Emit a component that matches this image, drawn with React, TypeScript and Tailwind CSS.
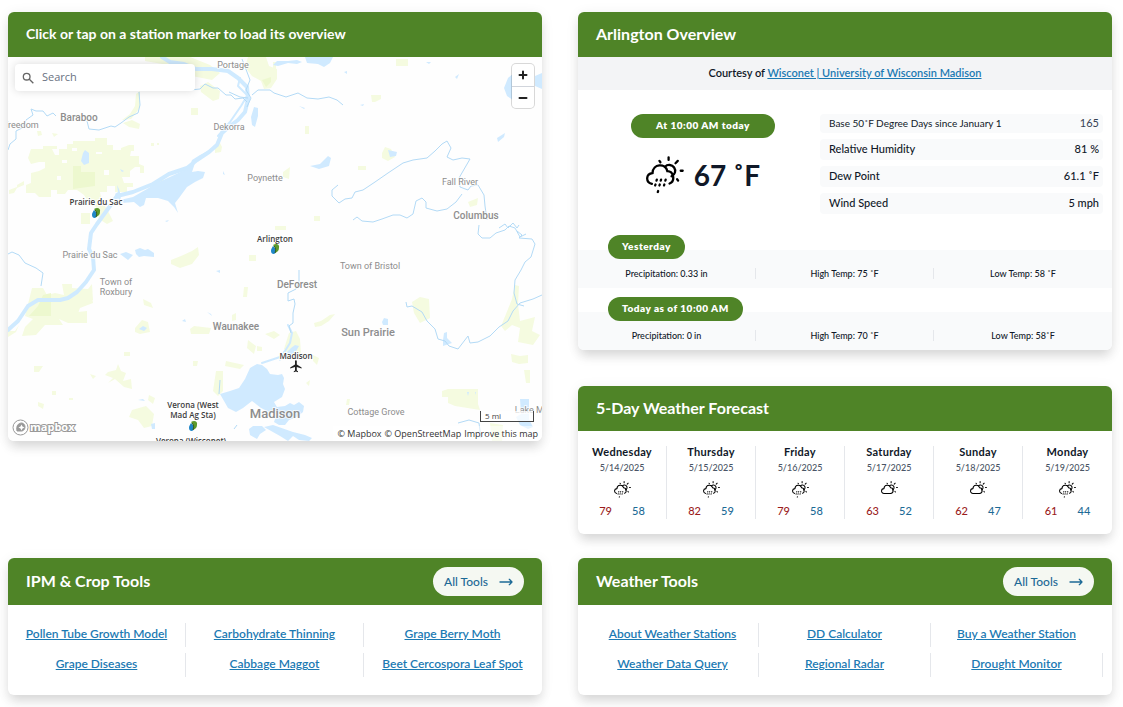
import { useState } from 'react'
import type { ReactNode } from 'react'

interface Town {
  name: string
  x: number
  y: number
  size: number
}

interface ForecastDay {
  day: string
  date: string
  rain: boolean
  high: number
  low: number
}

const towns: Town[] = [
  { name: 'Portage', x: 233, y: 68, size: 9 },
  { name: 'Baraboo', x: 79, y: 121, size: 10 },
  { name: 'Freedom', x: 21, y: 128, size: 9 },
  { name: 'Dekorra', x: 229, y: 130, size: 9 },
  { name: 'Poynette', x: 265, y: 181, size: 9 },
  { name: 'Fall River', x: 460, y: 185, size: 9 },
  { name: 'Columbus', x: 476, y: 219, size: 10 },
  { name: 'Prairie du Sac', x: 90, y: 258, size: 9 },
  { name: 'Town of', x: 116, y: 285, size: 9 },
  { name: 'Roxbury', x: 116, y: 295, size: 9 },
  { name: 'Town of Bristol', x: 370, y: 269, size: 9 },
  { name: 'DeForest', x: 297, y: 288, size: 10 },
  { name: 'Waunakee', x: 236, y: 330, size: 10 },
  { name: 'Sun Prairie', x: 368, y: 336, size: 11 },
  { name: 'Madison', x: 275, y: 418, size: 13 },
  { name: 'Cottage Grove', x: 376, y: 415, size: 9 },
  { name: 'Lake Mills', x: 535, y: 413, size: 9 },
]

const stationLabels = [
  { name: 'Prairie du Sac', x: 96, y: 205 },
  { name: 'Arlington', x: 275, y: 242 },
  { name: 'Madison', x: 296, y: 359 },
  { name: 'Verona (West', x: 193, y: 408 },
  { name: 'Mad Ag Sta)', x: 193, y: 418 },
  { name: 'Verona (Wisconet)', x: 191, y: 444 },
]

const stationMarkers = [
  { x: 96, y: 213 },
  { x: 275, y: 249 },
  { x: 193, y: 426 },
]

const conditions = [
  { label: 'Relative Humidity', value: '81 %' },
  { label: 'Dew Point', value: '61.1 ˚F' },
  { label: 'Wind Speed', value: '5 mph' },
]

const forecast: ForecastDay[] = [
  { day: 'Wednesday', date: '5/14/2025', rain: true, high: 79, low: 58 },
  { day: 'Thursday', date: '5/15/2025', rain: true, high: 82, low: 59 },
  { day: 'Friday', date: '5/16/2025', rain: true, high: 79, low: 58 },
  { day: 'Saturday', date: '5/17/2025', rain: false, high: 63, low: 52 },
  { day: 'Sunday', date: '5/18/2025', rain: false, high: 62, low: 47 },
  { day: 'Monday', date: '5/19/2025', rain: true, high: 61, low: 44 },
]

const cropTools = [
  'Pollen Tube Growth Model',
  'Carbohydrate Thinning',
  'Grape Berry Moth',
  'Grape Diseases',
  'Cabbage Maggot',
  'Beet Cercospora Leaf Spot',
]

const weatherTools = [
  'About Weather Stations',
  'DD Calculator',
  'Buy a Weather Station',
  'Weather Data Query',
  'Regional Radar',
  'Drought Monitor',
]

function WeatherIcon({ rain, className }: { rain: boolean; className: string }) {
  return (
    <svg viewBox="24 22 116 116" className={className} fill="none" stroke="#000" strokeWidth="7" strokeLinecap="round" aria-hidden="true">
      {/* Sun */}
      <path d="M82 55a18 18 0 1 1 20 29" />
      <path d="M93 26v8M114 44l7-7M130 67h6M119 93l3 4M65 37l3 4" />
      {/* Cloud */}
      {rain ? (
        <>
          <path d="M42 107c-20-5-19-31 2-33 1-29 39-31 45-6 20 0 25 31 7 38" />
          <path d="M57 94l-1 3M53 109l-1 3M70 94l-1 3M66 109l-1 3M61 129l-1 3M84 94l-1 3M80 109l-1 3" />
        </>
      ) : (
        <path d="M45 107c-24 0-22-32-1-33 1-29 39-31 45-6 24 0 24 39 0 39z" />
      )}
    </svg>
  )
}

function Card({ title, action, titleClass = 'text-base', children }: {
  title: string
  action?: ReactNode
  titleClass?: string
  children: ReactNode
}) {
  return (
    <section className="overflow-hidden rounded-md bg-white shadow-[0_8px_12px_-2px_rgba(0,0,0,0.12),0_2px_14px_rgba(0,0,0,0.07)]">
      <header className="flex items-center justify-between bg-[#4f8427] px-[18px] py-[9px]">
        <h2 className={`${titleClass} pb-0.5 leading-[25px] font-bold text-white`}>{title}</h2>
        {action}
      </header>
      {children}
    </section>
  )
}

function Pill({ children, className = '' }: { children: ReactNode; className?: string }) {
  return (
    <span className={`inline-block rounded-full bg-[#4f8427] pb-0.5 text-center text-[10px] leading-[22px] font-extrabold tracking-wider text-white ${className}`}>
      {children}
    </span>
  )
}

function StationMap() {
  const [query, setQuery] = useState('')

  return (
    <div className="relative h-96 overflow-hidden bg-[#fefefe]">
      <svg viewBox="8 57 534 384" preserveAspectRatio="xMidYMid slice" className="block h-full w-full" role="img" aria-label="Station map">
        {/* Parks and farmland */}
        <g fill="#f5fbe0">
          <path d="M145 57h45l20 8 10 8-8 7-20-4-12-9-35-6z" />
          <path d="M31 149h12v-3h14v3h-5l3 6h4v-6h8v-5h6v-3h22v-3h12v7h6v5h8v-2l8-3h5v6h-3l-1 5h9v8l5 2v7h-4v-6h-5l-5 4v6h-8l2 6h9v4h-6v5h-12v-6h-8v6h-7l2 10 5 7 6 12-6 3-8-5-3-12-7-4-5-8-7-5h-9l-3 4h-8v-4h-6v7h-12l-4-4h-9v-8l5-2v-10l8-2 6-3v-6h-6l-8 2-3-6z" />
          <path d="M9 190l8-3v-2l7-4v4l-7 3-3 5-5 1zM81 213h9v11h-9zM150 185h6v-5h8l-6 8h-8zM151 143h3v3h-3zM157 143h2v2h-2zM37 131h4l1 4-4 1zM52 133l6 1-4 3z" />
          <path d="M136 94l4-3v16l-4 6-5 6-9 1 8-6 5-8zM123 123l9-3 8 4-1 5-10-2z" />
          <path d="M200 86l8-4 12 9-1 8-6 2-12-9zM248 57h18l3 9 8 3v10l-6 9-7 1-3-8-9-5-7-9z" />
          <path d="M191 108h7v7h-7zM215 145l3-6 4 8-1 5-6 1zM396 59h12v7h-12zM371 95h10v4l-6 3h-3zM305 126h4v8h-4z" />
          <path d="M382 153l3-6 6 2 4 8-7 4-6-3zM283 172l7-5-1 12-6-2zM275 226h11v4h-11zM314 216h6v5h-6zM358 166h8v4h-8zM273 62h3v12h-3z" />
          <path d="M32 288h11l4 7 8-2 9 2-2-11h10v4l16 1 4-5 1 16-11-1-4 13 9-1v12H68l-9-4 4 6H45l-9 10-14 1 3-9 8-8-8-3z" />
          <path d="M70 295l21-5 2 13-13 5-3 8-6-1zM8 331h7l4-6-3 7-8 5zM171 260l10-4 11-5 6-4 1 8-7 9-12 4-9-4z" />
          <path d="M135 328l7-8 6 2 2 10-10 2-5-2zM190 329l4-3 17 2-2 6h-18zM143 299l8 4 2 5-9-3zM249 255h7v6h-7z" />
          <path d="M116 370l2-6 3 7 5 2-3 8 8-2 1 10-8-2-9-8-7 4 5-5-8-3 3-3z" />
          <path d="M216 371h7v20l-5 5-5-5zM226 361l18 4-4 4-15-3zM248 340l8 6-2 8-7-6zM257 346l5 1v4h-5zM244 287h4l-1 10h-4zM232 315l4-2v7l-4 1zM265 334l9-3 6 4-6 4z" />
          <path d="M34 366h9l-4 6h-5zM38 402l6 2-1 5-5-3zM124 352h6v4h-6zM193 361h5l-1 5h-4zM180 403h11v4h-11zM149 395l6 3-2 6-5-4zM52 391h4v4h-4zM69 398h4v2h-4zM90 374l6 2-3 3z" />
          <path d="M289 333l7-2 4 8 1 15-10 4-7-9zM314 323l7-2 9-6 5-1-6 7-8 5-6 1zM313 355l6 3-2 7-4-4zM306 383l4-3-1 6zM347 399h3l-1 6h-3z" />
          <path d="M412 302l8-5 9 2 1 19-10 5-6-10zM448 389h30v15l2 6-25-4-7-3v-6h-6v-6z" />
          <path d="M501 326l5-12 6-15 3-14 4 1-1 18 2 17 15-4-3 14 8 4-7 10-15-3 2-14-8-3-7 6z" />
          <path d="M511 354l9 2 8-1v8l-9 1-7-2zM524 370h6v13h-4zM490 423l13 2-1 16h-10z" />
          <path d="M468 202l10-4-1 7-7 2zM132 410l14-4 8 8-2 12-8 2-6-8-9-3z" />
        </g>
        <g fill="#edf8cf">
          <path d="M73 166h8v6h14v14l-22 3z" />
          <path d="M43 295l8-2v23H29l9-10zM262 80l9-3v5l-5 5z" />
        </g>
        <path fill="#fefefe" d="M62 160h5v3h-5zM96 152h6v2h-6zM57 176h4v4h-4zM104 170h5v5h-5zM72 148h5v3h-5z" />

        {/* Lakes */}
        <g fill="#d0eaff">
          <path d="M215 144L210 150 200 155 192 160 189 168 172 176 155 184 147 189 133 197 120 200 122 203 134 202 140 207 144 205 146 198 158 198 168 201 174 207 178 213 175 203 179 198 187 187 195 182 203 178 205 172 198 171 192 172 195 163 203 156 213 149z" />
          <path d="M83 153l2-3 4 3v10l-5 2-3-4zM251 117l3-10 4 1v8l-3 11-3-2zM117 185l2 4 2 7-1 5-5-7 3-2zM120 169l4 2-2 1zM223 171l2 4-2-1zM165 221l4-1-2 2z" />
          <path d="M274 64l3-3 11 0 9-1 5 2-5 2-9-1-10 3-5-1zM305 57l2 6 11 1 6 3 6-4 3-6z" />
          <path d="M310 166l10-2 8-8 3 2-2 8-10 3zM388 150l9 2-1 4-6 1zM497 138l8-5-1 4-6 5zM504 88l4-10 6-5-2 10 5 14-4 3-6-4zM542 73l-7 3v10l7 3zM455 77l4-3-2 5zM426 62h5l-2 2zM344 72l3-1v3zM360 105l4-1-1 2zM299 106l6 2-1 1z" />
          <path d="M120 254l6-2 7 3-5 5zM135 250l5-2 5 2 3-1 6 4v4l-10-1-5 1-3-3zM139 329l4-3 4 2-3 3zM182 321l3-2 1 3zM207 312l4 2 1 2zM216 271l4-1v3z" />
          <path d="M220 394l10-3 9-3 6-9 5-11 7-4 5 1 5 4 3 5 8 1 4-1 2 4-1 6 2 5-3 8-8 5 3 5 8-1 5-3 4 2 5-3 5 4-1 6-6 5-8 3-4 5-6 0-5-3 2-6 4-1-5-5-6 2-8-4-9-7-9 7-7 4-8-4z" />
          <path d="M281 357l5-4 5-5 4-3 4 1-4 7-9 5-7 3zM249 429l4-3h9l4 4-6 4-3 5-7-4zM264 427l9-2 20 7 12 3 7 3-3 3-10-1-6-4-5 5-8-5zM138 400l5-1 2 2zM151 424l4-1v6h-3z" />
          <path d="M382 322l2-4 4 1v6h-5zM443 340l1-7 3-1v6l5 5-9 3zM520 399h9v20l4 8-5 2-8-4-4-8 5-3zM467 392h2l-1 4zM475 392h1l-1 3z" />
        </g>

        {/* Rivers */}
        <g fill="none" stroke="#cfeaff" strokeLinejoin="round" strokeLinecap="round">
          <path strokeWidth="4" d="M162 57l8 5 14 2 12 5 16 0 16 2 10 7 9 9 1 12-3 13-7 8-8 6-8 7-5 12-8 7-12 8-10 8-18 6-16 10-20 8-16 4-7 10-13 18-6 9-2 16 4 8 1 13-8 12-9 10-9 6-8 2h-22l-10 6-10 15-10 9-12 2" />
          <path strokeWidth="2" d="M262 363l18-6 5-6 5-8 2-10-4-8M240 78l-2 8 8 8M247 96l-6 10-11 16-12 14" />
        </g>
        <g fill="none" stroke="#b3daf6" strokeWidth="1" strokeLinejoin="round">
          <path d="M8 150l2-6 6-5 0-8 6-3 4-8 7-5-2-6 5 2 7 0 4 5 6-3 3 3M87 121l2 8 10 1 12-4 4 1 6-4 8-6 9-4 2-8-1-13" />
          <path d="M8 254l4-2 7 3 6 8 11 5 7 5-2 13" />
          <path d="M190 90l10-1 5-5 8 4 5 0 8 7 5 0 4 4 8-1 4 4M252 95l6-5 12 0 4 3 12 4 12-4 9 5 11 1 11-2 8 3 6 5" />
          <path d="M338 185l-6 5 0 6 7 7 6-4 7-1 3-6 8-2 12-8 13-9 15-10 10-3 14-2 8-7 7-7 5-3 4 7-4 9 6 3 9-2 8 1-11 19 1 9 8 3 3-4 7-1 6 10 1 11 2 14" />
          <path d="M353 220l4-3 5 4 11 1 9-3 11-4 7 0 7 3 6-4 3-13 6-3 4 4 0 6 11 3 10-2 9-7 6-8M499 228l6-4 3 4 5-5 4 5 2-3M479 225l-1 9 4 4 8 0 6-5 9-3 4-4 6 2 5 9 6-3" />
          <path d="M517 231l5 4-3 3 13 1 3 5-4 13-6 5-4 8-6 10-1 13 3 11 7 2M542 295l-9 4-13 4-7 8-5 10-9 6-9 9-12 6-8 1-2-7-10 13-9-3-4-5-7-2-3-10-8-8-5-9-10-6-5 1-1-5" />
          <path d="M299 270v12l-3 7-8 4 0 8 6-2 1 5-2 9 0 10-4 3 2 7M220 380l-1 14M458 423l11-3 10 3 2 15M237 425l-3 4M242 59l5 13 3 8-4 10 5 8-4 9M229 92l11 5 8 1" />
        </g>

        {/* Town names */}
        <g textAnchor="middle" fill="#8d8d8d" stroke="#fff" strokeWidth="2" strokeOpacity="0.7" paintOrder="stroke" className="font-['Roboto',sans-serif] font-normal">
          {towns.map((town) => (
            <text key={town.name} x={town.x} y={town.y} fontSize={town.size} className={town.size > 9 ? 'font-medium' : ''}>{town.name}</text>
          ))}
        </g>

        {/* Stations */}
        <g textAnchor="middle" fill="#3c3c3c" stroke="#fff" strokeWidth="2" paintOrder="stroke" fontSize="8" className="font-['Open_Sans',sans-serif] font-semibold">
          {stationLabels.map((label) => (
            <text key={label.name} x={label.x} y={label.y}>{label.name}</text>
          ))}
        </g>
        {stationMarkers.map((marker) => (
          <g key={`${marker.x}-${marker.y}`} transform={`translate(${marker.x} ${marker.y})`}>
            <path d="M-2-3c-2 3-2 4-2 5 0 4 5 4 5 0 0-2-1-3-3-5z" fill="#1f86c7" />
            <path d="M-2-4c3-2 7-1 6 3 0 3-2 4-4 5 1-4 0-6-2-8z" fill="#5c9a2c" />
            <path d="M-1-3c2 2 2 4 1 7" fill="none" stroke="#345b22" strokeWidth="1" />
          </g>
        ))}
        <path transform="translate(289 359) scale(.6)" fill="#222" d="M21 16v-2l-8-5V3.500a1.500 1.500 0 0 0-3 0V9l-8 5v2l8-2.500V19l-2 1.500V22l3.500-1 3.500 1v-1.500L13 19v-5.500z" />

        {/* Mapbox logo */}
        <g stroke="#999" fill="#fff">
          <circle cx="20.500" cy="427.500" r="7.500" strokeWidth="1" />
          <path d="M17 431c-1-5 1-8 5-8 4 1 4 7 0 8z" fill="#999" />
          <path d="M21.500 424.500l1 2 2 1-2 1-1 2-1-2-2-1 2-1z" strokeWidth="0" />
          <text x="30" y="431" fontSize="11" strokeWidth="2" paintOrder="stroke" className="font-['Open_Sans',sans-serif] font-bold">mapbox</text>
        </g>
      </svg>

      {/* Search box */}
      <label className="absolute top-[7px] left-[7px] flex h-[27px] w-[180px] items-center gap-2 rounded bg-white px-[7px] shadow-[0_0_8px_rgba(0,0,0,0.14)]">
        <svg viewBox="0 0 18 18" className="h-3 w-3 shrink-0" fill="none" stroke="#666" strokeWidth="2" aria-hidden="true">
          <circle cx="7" cy="7" r="5" />
          <path d="M11 11l6 6" />
        </svg>
        <input
          type="text"
          aria-label="Search"
          placeholder="Search"
          value={query}
          onChange={(e) => setQuery(e.target.value)}
          className="w-full min-w-0 font-['Open_Sans',sans-serif] text-[11px] text-gray-700 outline-none placeholder:text-gray-500"
        />
      </label>

      {/* Zoom controls */}
      <div className="absolute top-[7px] right-2 flex w-[22px] flex-col divide-y divide-gray-300 overflow-hidden rounded-sm bg-white ring-1 ring-black/15">
        <button type="button" aria-label="Zoom in" className="grid h-[23px] place-items-center">
          <svg viewBox="0 0 10 10" className="h-2.5 w-2.5" stroke="#222" strokeWidth="2" strokeLinecap="round"><path d="M5 1.500v7M1.500 5h7" /></svg>
        </button>
        <button type="button" aria-label="Zoom out" className="grid h-[21px] place-items-center">
          <svg viewBox="0 0 10 10" className="h-2.5 w-2.5" stroke="#222" strokeWidth="2" strokeLinecap="round"><path d="M1.500 5h7" /></svg>
        </button>
      </div>

      {/* Scale and attribution */}
      <div className="absolute right-2 bottom-[19px] h-[11px] w-[54px] border border-t-0 border-[#444] bg-white/75 px-1 font-['Open_Sans',sans-serif] text-[8px] leading-[9px] text-[#444]">
        5 mi
      </div>
      <div className="absolute right-0 bottom-0 flex gap-[3px] bg-white/50 px-1 font-['Open_Sans',sans-serif] text-[9px] leading-[15px] text-[#333]">
        <a href="#mapbox">© Mapbox</a>
        <a href="#osm">© OpenStreetMap</a>
        <a href="#improve">Improve this map</a>
      </div>
    </div>
  )
}

function DaySummary({ title, items }: { title: string; items: string[] }) {
  return (
    <div>
      <Pill className="relative ml-[30px] px-3.5 align-top">{title}</Pill>
      <div className="-mt-[9px] grid grid-cols-3 divide-x divide-gray-200 bg-[#f9fafb] pt-[18px] pb-[9px]">
        {items.map((item) => (
          <div key={item} className="text-center text-[9px] leading-[11px] font-medium text-gray-900">{item}</div>
        ))}
      </div>
    </div>
  )
}

function Overview() {
  return (
    <Card title="Arlington Overview">
      <p className="bg-gray-100 pb-0.5 text-center text-[11px] leading-[31px] font-semibold text-gray-900">
        Courtesy of{' '}
        <a href="#wisconet" className="text-[#1c7ab3] underline">Wisconet | University of Wisconsin Madison</a>
      </p>
      <div className="flex gap-[45px] pt-6 pr-[9px] pb-[21px] pl-[53px]">
        <div className="w-36 shrink-0">
          <Pill className="w-full align-top">At 10:00 AM today</Pill>
          <div className="mt-[17px] flex items-center justify-center gap-2.5">
            <WeatherIcon rain className="h-[38px] w-[38px]" />
            <span className="text-[28px] leading-10 font-bold text-gray-900">67 ˚F</span>
          </div>
        </div>
        <dl className="flex flex-1 flex-col gap-1.5 text-gray-900">
          <div className="flex justify-between rounded bg-[#f9fafb] pr-1 pl-[9px]">
            <dt className="text-[10px] leading-[19px]">Base 50˚F Degree Days since January 1</dt>
            <dd className="pb-0.5 text-[11px] leading-[17px] text-gray-700">165</dd>
          </div>
          {conditions.map((row) => (
            <div key={row.label} className="flex justify-between rounded bg-[#f9fafb] pr-1 pb-0.5 pl-[9px] text-[11px] leading-[19px] font-medium">
              <dt>{row.label}</dt>
              <dd>{row.value}</dd>
            </div>
          ))}
        </dl>
      </div>
      <div className="flex flex-col gap-[9px]">
        <DaySummary title="Yesterday" items={['Precipitation: 0.33 in', 'High Temp: 75 ˚F', 'Low Temp: 58 ˚F']} />
        <DaySummary title="Today as of 10:00 AM" items={['Precipitation: 0 in', 'High Temp: 70 ˚F', 'Low Temp: 58˚F']} />
      </div>
    </Card>
  )
}

function Forecast() {
  return (
    <Card title="5-Day Weather Forecast">
      <ul className="grid grid-cols-6 divide-x divide-gray-200 py-[15px]">
        {forecast.map((day) => (
          <li key={day.day} className="flex h-[73px] flex-col items-center">
            <h3 className="text-[11px] leading-3 font-bold tracking-wide text-gray-900">{day.day}</h3>
            <p className="mt-1 text-[9px] leading-3 font-medium text-gray-600">{day.date}</p>
            <WeatherIcon rain={day.rain} className="mt-[7px] h-[17px] w-[17px]" />
            <p className="mt-1.5 flex gap-5 text-[11px] leading-[14px] font-medium">
              <span className="text-[#9b1c1c]">{day.high}</span>
              <span className="text-[#1d6a96]">{day.low}</span>
            </p>
          </li>
        ))}
      </ul>
    </Card>
  )
}

function ToolsCard({ title, tools, listClass, lastDivider = false }: {
  title: string
  tools: string[]
  listClass: string
  lastDivider?: boolean
}) {
  return (
    <Card
      title={title}
      action={
        <a href="#all-tools" className="flex h-[29px] items-center gap-2.5 rounded-full bg-[#f5f8f2] pr-2.5 pl-[11px] text-xs font-medium text-[#1d6a96]">
          All Tools
          <svg viewBox="0 0 24 24" className="h-4 w-4" fill="none" stroke="currentColor" strokeWidth="2" strokeLinecap="round" strokeLinejoin="round" aria-hidden="true">
            <path d="M17 8l4 4m0 0l-4 4m4-4H3" />
          </svg>
        </a>
      }
    >
      <ul className={`grid grid-cols-3 gap-y-1.5 py-[18px] ${listClass}`}>
        {tools.map((tool, index) => (
          <li
            key={tool}
            className={`border-r pb-0.5 text-center text-xs leading-[22px] font-semibold whitespace-nowrap ${
              index % 3 !== 2 || (lastDivider && index === tools.length - 1) ? 'border-gray-200' : 'border-transparent'
            }`}
          >
            <a href="#tool" className="text-[#1c7ab3] underline">{tool}</a>
          </li>
        ))}
      </ul>
    </Card>
  )
}

export default function App() {
  return (
    <main className="grid grid-cols-2 gap-x-9 gap-y-6 bg-white pt-3 pr-[11px] pb-3 pl-2 font-['Lato',sans-serif]">
      <div>
        <Card title="Click or tap on a station marker to load its overview" titleClass="text-sm">
          <StationMap />
        </Card>
      </div>
      <div className="flex flex-col gap-9">
        <Overview />
        <Forecast />
      </div>
      <ToolsCard title="IPM & Crop Tools" tools={cropTools} listClass="" />
      <ToolsCard title="Weather Tools" tools={weatherTools} listClass="px-[9px]" lastDivider />
    </main>
  )
}
